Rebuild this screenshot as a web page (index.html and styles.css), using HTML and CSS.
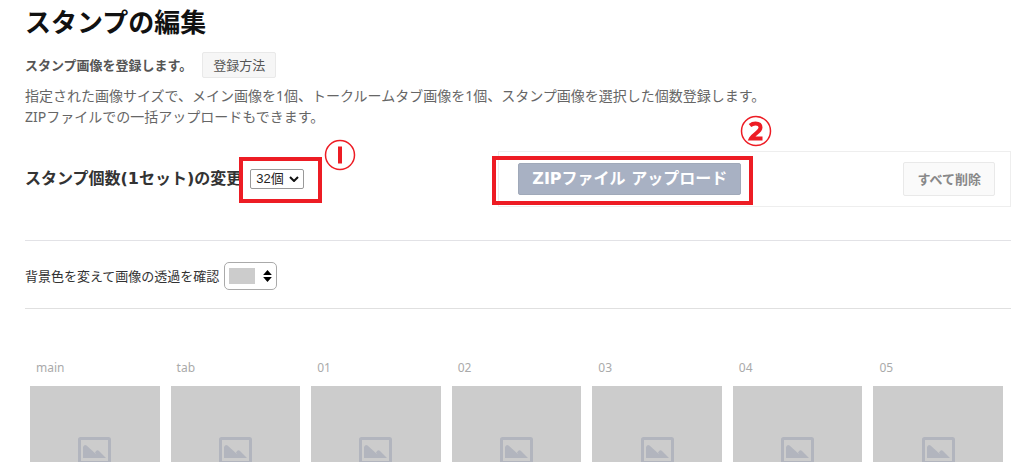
FILE: index.html
```html
<!DOCTYPE html>
<html lang="ja">
<head>
<meta charset="utf-8">
<meta name="viewport" content="width=device-width, initial-scale=1">
<title>スタンプの編集</title>
<link rel="stylesheet" href="styles.css">
</head>
<body>
<svg class="defs" aria-hidden="true">
  <symbol id="picture" viewBox="0 0 33 27">
    <rect x="1.5" y="1.5" width="30" height="24" rx="1" fill="none" stroke="currentColor" stroke-width="3"/>
    <path fill="currentColor" d="M5 21V10Q6.500 7 8.500 8.500L18.500 17.500L17 15.500Q19 12 21 14L28 21z"/>
  </symbol>
</svg>
<main class="page">
  <h1 class="title">スタンプの編集</h1>
  <div class="intro">
    <strong class="intro-lead">スタンプ画像を登録します。</strong>
    <button class="btn btn-help" type="button">登録方法</button>
  </div>
  <p class="description">指定された画像サイズで、メイン画像を1個、トークルームタブ画像を1個、スタンプ画像を選択した個数登録します。<br>ZIPファイルでの一括アップロードもできます。</p>

  <section class="toolbar">
    <div class="count">
      <label class="count-label" for="count">スタンプ個数(1セット)の変更</label>
      <span class="count-field">
        <select class="count-select" id="count"><option>32個</option></select>
        <svg class="chevron" viewBox="0 0 10 6" aria-hidden="true"><path d="M1 1l4 4 4-4" fill="none" stroke="#111" stroke-width="2"/></svg>
        <span class="frame frame-count"></span>
        <svg class="mark mark-one" viewBox="0 0 32 32" role="img" aria-label="1"><circle cx="16" cy="16" r="14.500"/><path d="M16 7.500v17"/></svg>
      </span>
    </div>
    <div class="actions">
      <span class="upload">
        <button class="btn-upload" type="button">ZIPファイル アップロード</button>
        <span class="frame frame-upload"></span>
        <svg class="mark mark-two" viewBox="0 0 32 32" role="img" aria-label="2"><circle cx="16" cy="16" r="14.500"/><path d="M10 10.500Q12.500 8.500 15.500 8.500Q20.500 8.500 20.500 12.500Q20.500 15 16 18.500Q12 21.500 11 23.500H22.500"/></svg>
      </span>
      <button class="btn btn-delete" type="button">すべて削除</button>
    </div>
  </section>

  <section class="preview">
    <label for="background">背景色を変えて画像の透過を確認</label>
    <span class="swatch-field">
      <select class="swatch-select" id="background"><option value="#cccccc" aria-label="グレー"></option></select>
      <svg class="updown" viewBox="0 0 8 11" aria-hidden="true"><path d="M0 4.500L4 0l4 4.500zM0 6.500L4 11l4-4.500z"/></svg>
    </span>
  </section>

  <ul class="stamps">
    <li class="stamp"><span class="stamp-name">main</span><div class="tile"><svg class="picture"><use href="#picture"/></svg></div></li>
    <li class="stamp"><span class="stamp-name">tab</span><div class="tile"><svg class="picture"><use href="#picture"/></svg></div></li>
    <li class="stamp"><span class="stamp-name">01</span><div class="tile"><svg class="picture"><use href="#picture"/></svg></div></li>
    <li class="stamp"><span class="stamp-name">02</span><div class="tile"><svg class="picture"><use href="#picture"/></svg></div></li>
    <li class="stamp"><span class="stamp-name">03</span><div class="tile"><svg class="picture"><use href="#picture"/></svg></div></li>
    <li class="stamp"><span class="stamp-name">04</span><div class="tile"><svg class="picture"><use href="#picture"/></svg></div></li>
    <li class="stamp"><span class="stamp-name">05</span><div class="tile"><svg class="picture"><use href="#picture"/></svg></div></li>
  </ul>
</main>
</body>
</html>
```
FILE: styles.css
```css
* { box-sizing: border-box; }

body {
  margin: 0;
  height: 100vh;
  overflow: hidden;
  background: #fff;
  color: #333;
  font: 13px/20px "Noto Sans", "Noto Sans CJK JP", sans-serif;
}

button, select { font: inherit; }

.defs { position: absolute; width: 0; height: 0; }

.page { padding: 4px 13px 0 25px; }

.title {
  margin: 0;
  color: #111;
  font-size: 26px;
  line-height: 36px;
}

.intro {
  display: flex;
  align-items: center;
  gap: 10px;
  margin-top: 12px;
}

.intro-lead { color: #555; }

.btn {
  border: 1px solid #e9e9e9;
  border-radius: 2px;
  background: #f6f6f6;
  color: #555;
}

.btn-help {
  height: 26px;
  padding: 0 10px;
}

.description {
  margin: 7px 0 0;
  color: #666;
  font-size: 14px;
  line-height: 21px;
}

.toolbar {
  display: flex;
  justify-content: space-between;
  padding: 24px 0 33px;
  border-bottom: 1px solid #e2e2e6;
}

.count {
  display: flex;
  align-items: center;
  gap: 8px;
}

.count-label, .btn-upload {
  font: bold 16px/24px "DejaVu Sans", "Noto Sans CJK JP", sans-serif;
  white-space: nowrap;
}

.count-field, .upload, .swatch-field {
  position: relative;
  display: flex;
}

.count-select {
  appearance: none;
  width: 54px;
  height: 20px;
  padding: 0 5px;
  border: 1px solid #999;
  border-radius: 2px;
  background: #fff;
  color: #222;
  font: 13px/18px "Liberation Sans", "Noto Sans CJK JP", sans-serif;
}

.chevron {
  position: absolute;
  top: 7px;
  right: 5px;
  width: 10px;
  height: 6px;
  pointer-events: none;
}

.actions {
  display: flex;
  flex: 0 0 52%;
  align-items: center;
  justify-content: space-between;
  height: 56px;
  padding: 0 15px 0 19px;
  border: 1px solid #eee;
}

.btn-upload {
  height: 32px;
  padding: 0 13px;
  border: 1px solid #a0a9b9;
  border-radius: 2px;
  background: #a8b1c3;
  color: #fff;
}

.btn-delete {
  height: 34px;
  padding: 0 13px;
  background: #fafafa;
  color: #888;
  font-weight: bold;
}

.frame {
  position: absolute;
  border: 4px solid #ed1c24;
  pointer-events: none;
}

.frame-count { inset: -12px -18px -14px -11px; }

.frame-upload { inset: -7px -12px -10px -26px; }

.mark {
  position: absolute;
  width: 32px;
  height: 32px;
  fill: none;
  stroke: #ed1c24;
  stroke-width: 4;
}

.mark circle { stroke-width: 1.5; }

.mark-one { top: -30px; right: -52px; }

.mark-two { top: -48px; right: -31px; }

.preview {
  display: flex;
  align-items: center;
  gap: 5px;
  padding: 21px 0 18px;
  border-bottom: 1px solid #e0e0e0;
}

.swatch-select {
  appearance: none;
  width: 53px;
  height: 28px;
  border: 1px solid #aaa;
  border-radius: 5px;
  background: linear-gradient(#ccc, #ccc) 4px center / 26px 16px no-repeat #fff;
}

.updown {
  position: absolute;
  top: 8px;
  right: 5px;
  width: 9px;
  height: 12px;
  pointer-events: none;
}

.stamps {
  display: grid;
  grid-template-columns: repeat(7, 1fr);
  gap: 11px;
  margin: 49px 8px 0 5px;
  padding: 0;
  list-style: none;
}

.stamp-name {
  display: block;
  padding-left: 6px;
  color: #aaa;
  font-size: 12px;
}

.tile {
  display: flex;
  align-items: center;
  justify-content: center;
  aspect-ratio: 1;
  margin-top: 8px;
  background: #ccc;
}

.picture {
  width: 33px;
  height: 27px;
  color: #b2b5be;
}
```
